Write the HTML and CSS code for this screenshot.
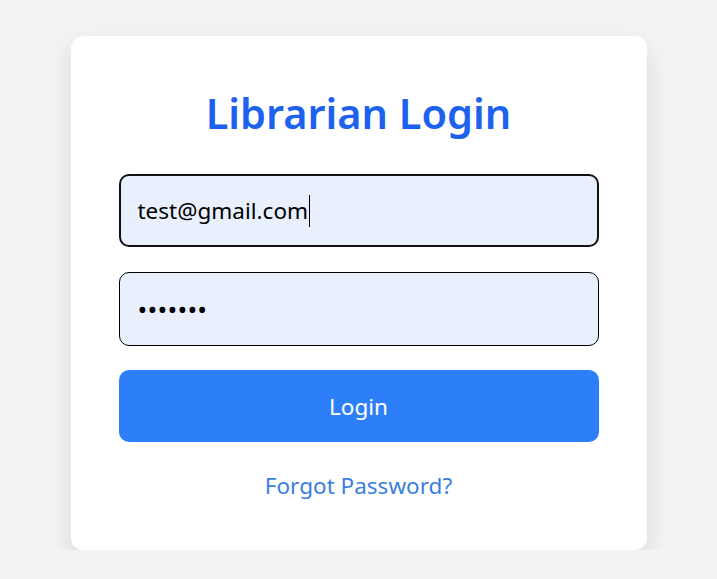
FILE: index.html
```html
<!DOCTYPE html>
<html lang="en">
<head>
<meta charset="utf-8">
<title>Librarian Login</title>
<link rel="stylesheet" href="styles.css">
</head>
<body>
<main class="page">
  <form class="card" onsubmit="return false">
    <h1 class="title">Librarian Login</h1>
    <div class="field focused" role="textbox" aria-label="Email">test@gmail.com<span class="caret"></span></div>
    <input class="field password" type="password" value="1234567" aria-label="Password">
    <button class="btn" type="submit">Login</button>
    <a class="link" href="#">Forgot Password?</a>
  </form>
</main>
</body>
</html>
```
FILE: styles.css
```css
html, body {
  margin: 0;
  padding: 0;
  background: #f2f3f5;
  font-family: "Noto Sans", "Open Sans", sans-serif;
}
.page {
  display: flex;
  justify-content: center;
  padding-top: 36px;
}
.card {
  width: 576px;
  height: 514px;
  box-sizing: border-box;
  background: #fff;
  border-radius: 12px;
  box-shadow: 0 10px 25px rgba(0, 0, 0, 0.11);
  padding: 50px 48px 0;
  display: flex;
  flex-direction: column;
}
.title {
  margin: 0 0 34px;
  text-align: center;
  color: #1c62ee;
  font-size: 41.5px;
  font-weight: 600;
  line-height: 54px;
}
.field {
  height: 74px;
  box-sizing: border-box;
  border: 1px solid #000;
  border-radius: 10px;
  background: #e8f0fe;
  padding: 0 18px;
  font-family: inherit;
  font-size: 22.5px;
  color: #000;
  margin: 0 0 24px;
  outline: none;
  display: flex;
  align-items: center;
}
.field.focused {
  border: 2px solid #111;
  padding: 0 17px;
  height: 73px;
  margin-bottom: 25px;
}
.field.password {
  font-size: 26px;
  letter-spacing: 0.2px;
}
.caret {
  display: inline-block;
  width: 1px;
  height: 32px;
  background: #000;
  margin-left: 1px;
}
.btn {
  height: 72px;
  border: none;
  border-radius: 10px;
  background: #2d7ff9;
  color: #fff;
  font-family: inherit;
  font-size: 22.5px;
  cursor: pointer;
}
.link {
  margin-top: 28px;
  text-align: center;
  color: #3a7ee4;
  font-size: 22.5px;
  text-decoration: none;
  line-height: 32px;
}
```
